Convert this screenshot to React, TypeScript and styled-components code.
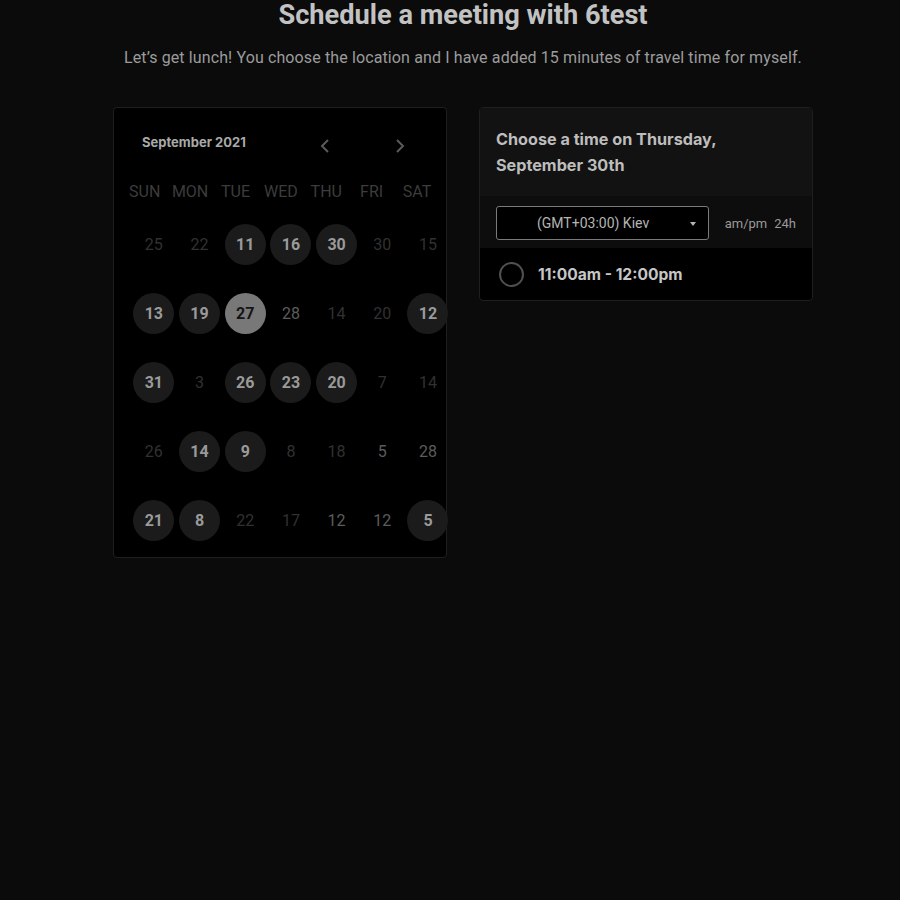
import React from "react";
import styled, { createGlobalStyle } from "styled-components";

const GlobalStyle = createGlobalStyle`
  html, body {
    margin: 0;
    padding: 0;
    background: #0b0b0b;
  }
  body {
    font-family: Roboto, "Liberation Sans", sans-serif;
    color: #bdbdbd;
  }
`;

const Page = styled.div`
  min-height: 900px;
  padding-left: 26px;
  display: flex;
  flex-direction: column;
  align-items: center;
`;

const Title = styled.h1`
  margin: 0;
  font-family: Roboto, "Liberation Sans", sans-serif;
  font-weight: 700;
  font-size: 27.2px;
  line-height: 30px;
  color: #c2c2c2;
`;

const Subtitle = styled.p`
  margin: 14px 0 0;
  font-size: 16px;
  line-height: 28px;
  letter-spacing: 0.12px;
  color: #9c9c9c;
`;

const Columns = styled.div`
  display: flex;
  gap: 32px;
  margin-top: 35px;
  align-items: flex-start;
`;

const Panel = styled.div`
  width: 334px;
  box-sizing: border-box;
  background: #000;
  border: 1px solid #1f1f1f;
  border-radius: 4px;
`;

const CalendarPanel = styled(Panel)`
  height: 451px;
  padding: 14px 8px 0;
`;

const CalHeader = styled.div`
  display: flex;
  align-items: center;
  height: 40px;
  padding: 0 30px 0 20px;
`;

const Month = styled.div`
  font-family: Inter, "Liberation Sans", sans-serif;
  font-weight: 700;
  font-size: 13px;
  color: #a9a9a9;
`;

const Nav = styled.div`
  margin-left: auto;
  display: flex;
  gap: 59px;
  padding-top: 8px;
`;

const NavButton = styled.button`
  width: 16px;
  height: 16px;
  padding: 0;
  border: none;
  background: none;
  display: flex;
  align-items: center;
  justify-content: center;
  color: #5a5a5a;
`;

const WeekRow = styled.div`
  display: grid;
  grid-template-columns: repeat(7, 45.4px);
  margin-top: 17px;
  height: 24px;
  align-items: center;
`;

const WeekDay = styled.div`
  text-align: center;
  font-size: 16px;
  color: #3c3c3c;
`;

const DayGrid = styled.div`
  display: grid;
  grid-template-columns: repeat(7, 45.7px);
  grid-auto-rows: 69px;
  margin-top: 7px;
  margin-left: 9px;
`;

const Cell = styled.div`
  display: flex;
  align-items: center;
  justify-content: center;
`;

type Kind = "off" | "mid" | "on" | "sel";

const Day = styled.div<{ $kind: Kind }>`
  width: 41px;
  height: 41px;
  border-radius: 50%;
  display: flex;
  align-items: center;
  justify-content: center;
  font-size: 16px;
  font-weight: ${(p) => (p.$kind === "on" || p.$kind === "sel" ? 700 : 400)};
  background: ${(p) =>
    p.$kind === "sel" ? "#787878" : p.$kind === "on" ? "#1b1b1b" : "transparent"};
  color: ${(p) =>
    p.$kind === "sel"
      ? "#141414"
      : p.$kind === "on"
      ? "#9a9a9a"
      : p.$kind === "mid"
      ? "#5c5c5c"
      : "#313131"};
`;

const TimePanel = styled(Panel)`
  overflow: hidden;
`;

const TimeHeader = styled.div`
  background: #121212;
  height: 88px;
  box-sizing: border-box;
  padding: 18px 16px 0;
  font-family: Inter, "Liberation Sans", sans-serif;
  font-weight: 700;
  font-size: 16.2px;
  line-height: 26px;
  color: #bdbdbd;
`;

const ZoneRow = styled.div`
  background: #0d0d0d;
  height: 52px;
  box-sizing: border-box;
  padding: 10px 16px 0;
  display: flex;
  align-items: flex-start;
`;

const Select = styled.div`
  width: 213px;
  height: 34px;
  box-sizing: border-box;
  border: 1px solid #7a7a7a;
  border-radius: 3px;
  background: #000;
  display: flex;
  align-items: center;
  position: relative;
  padding-left: 40px;
  font-size: 14px;
  color: #b4b4b4;
`;

const Caret = styled.span`
  position: absolute;
  right: 12px;
  top: 15px;
  width: 0;
  height: 0;
  border-left: 3.5px solid transparent;
  border-right: 3.5px solid transparent;
  border-top: 4px solid #b4b4b4;
`;

const Formats = styled.div`
  margin-left: 16px;
  height: 34px;
  display: flex;
  align-items: center;
  gap: 7px;
  font-size: 13px;
  color: #9a9a9a;
`;

const SlotRow = styled.div`
  height: 52px;
  box-sizing: border-box;
  padding: 0 19px;
  display: flex;
  align-items: center;
  gap: 14px;
`;

const Radio = styled.span`
  width: 21px;
  height: 21px;
  border: 2px solid #505050;
  border-radius: 50%;
`;

const SlotText = styled.span`
  font-family: Inter, "Liberation Sans", sans-serif;
  font-weight: 700;
  font-size: 15.6px;
  color: #c6c6c6;
`;

const weekDays = ["SUN", "MON", "TUE", "WED", "THU", "FRI", "SAT"];

const days: [string, Kind][] = [
  ["25", "off"], ["22", "off"], ["11", "on"], ["16", "on"], ["30", "on"], ["30", "off"], ["15", "off"],
  ["13", "on"], ["19", "on"], ["27", "sel"], ["28", "mid"], ["14", "off"], ["20", "off"], ["12", "on"],
  ["31", "on"], ["3", "off"], ["26", "on"], ["23", "on"], ["20", "on"], ["7", "off"], ["14", "off"],
  ["26", "off"], ["14", "on"], ["9", "on"], ["8", "off"], ["18", "off"], ["5", "mid"], ["28", "mid"],
  ["21", "on"], ["8", "on"], ["22", "off"], ["17", "off"], ["12", "mid"], ["12", "mid"], ["5", "on"],
];

const Chevron = ({ dir }: { dir: "left" | "right" }) => (
  <svg width="10" height="16" viewBox="0 0 10 16" fill="none">
    <path
      d={dir === "left" ? "M8 2 L2 8 L8 14" : "M2 2 L8 8 L2 14"}
      stroke="currentColor"
      strokeWidth="2"
    />
  </svg>
);

export default function App() {
  return (
    <>
      <GlobalStyle />
      <Page>
        <Title>Schedule a meeting with 6test</Title>
        <Subtitle>
          Let’s get lunch! You choose the location and I have added 15 minutes of travel time for myself.
        </Subtitle>
        <Columns>
          <CalendarPanel>
            <CalHeader>
              <Month>September 2021</Month>
              <Nav>
                <NavButton>
                  <Chevron dir="left" />
                </NavButton>
                <NavButton>
                  <Chevron dir="right" />
                </NavButton>
              </Nav>
            </CalHeader>
            <WeekRow>
              {weekDays.map((d) => (
                <WeekDay key={d}>{d}</WeekDay>
              ))}
            </WeekRow>
            <DayGrid>
              {days.map(([n, k], i) => (
                <Cell key={i}>
                  <Day $kind={k}>{n}</Day>
                </Cell>
              ))}
            </DayGrid>
          </CalendarPanel>
          <TimePanel>
            <TimeHeader>
              Choose a time on Thursday,
              <br />
              September 30th
            </TimeHeader>
            <ZoneRow>
              <Select>
                (GMT+03:00) Kiev
                <Caret />
              </Select>
              <Formats>
                <span>am/pm</span>
                <span>24h</span>
              </Formats>
            </ZoneRow>
            <SlotRow>
              <Radio />
              <SlotText>11:00am - 12:00pm</SlotText>
            </SlotRow>
          </TimePanel>
        </Columns>
      </Page>
    </>
  );
}
